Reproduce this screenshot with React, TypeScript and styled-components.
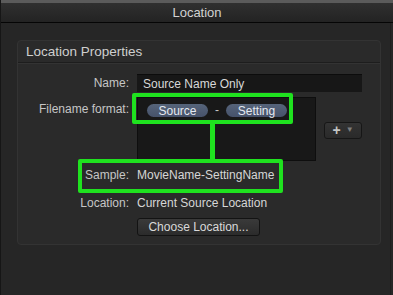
import styled, { createGlobalStyle } from "styled-components";

const GlobalStyle = createGlobalStyle`
  html, body {
    margin: 0;
    padding: 0;
    background: #262626;
  }
  body {
    font-family: "Liberation Sans", Arial, sans-serif;
    -webkit-font-smoothing: antialiased;
  }
`;

const ANNOTATE = "#1fe21f";

const Window = styled.div`
  width: 393px;
  height: 295px;
  display: flex;
  flex-direction: column;
  background: #262626;
  border-left: 1px solid #161616;
  box-sizing: border-box;
  overflow: hidden;
`;

const TopStrip = styled.div`
  height: 3px;
  background: #5b5b5b;
`;

const TitleBar = styled.div`
  height: 19px;
  display: flex;
  align-items: center;
  justify-content: center;
  background: linear-gradient(#303030, #232323);
  border-bottom: 1px solid #050505;
  color: #d2d2d2;
  font-size: 13px;
`;

const Body = styled.div`
  flex: 1;
  padding: 17px 9px 0 16px;
  border-right: 1px solid #1e1e1e;
  margin-right: 2px;
`;

const Panel = styled.div`
  position: relative;
  background: #2a2a2a;
  border: 1px solid #333;
  border-radius: 4px;
  padding-bottom: 8px;
`;

const PanelHeader = styled.div`
  height: 21px;
  display: flex;
  align-items: center;
  padding-left: 8px;
  color: #cfcfcf;
  font-size: 13.5px;
  border-bottom: 1px solid #1d1d1d;
  box-shadow: 0 1px 0 #333;
`;

const Form = styled.div`
  display: grid;
  grid-template-columns: 111px 1fr;
  column-gap: 8px;
  padding: 11px 22px 0 0;
`;

const Label = styled.div<{ $top?: number }>`
  justify-self: end;
  align-self: ${({ $top }) => ($top !== undefined ? "start" : "center")};
  padding-top: ${({ $top }) => $top ?? 0}px;
  color: #c6c6c6;
  font-size: 12px;
  line-height: 14px;
  white-space: nowrap;
`;

const Value = styled.div<{ $mt?: number }>`
  color: #d6d6d6;
  font-size: 12px;
  line-height: 14px;
  white-space: nowrap;
`;

const Cell = styled.div<{ $mt?: number }>`
  margin-top: ${({ $mt }) => $mt ?? 0}px;
  display: flex;
  align-items: center;
`;

const TextField = styled.div`
  flex: 1;
  height: 18px;
  box-sizing: border-box;
  background: #171717;
  border-top: 1px solid #0c0c0c;
  padding: 0 6px;
  display: flex;
  align-items: center;
  color: #d8d8d8;
  font-size: 12px;
`;

const TokenField = styled.div`
  width: 179px;
  height: 64px;
  box-sizing: border-box;
  background: #181818;
  border: 1px solid #0e0e0e;
  padding: 5px 0 0 9px;
  display: flex;
  align-items: flex-start;
  gap: 7px;
  color: #bbb;
  font-size: 12px;
`;

const Token = styled.span`
  height: 13px;
  width: 61px;
  margin-top: 1px;
  display: inline-flex;
  align-items: center;
  justify-content: center;
  border-radius: 7px;
  background: linear-gradient(#56647a, #46526a);
  color: #e4e9f0;
  font-size: 12px;
`;

const Dash = styled.span`
  line-height: 15px;
  color: #c8c8c8;
`;

const AddButton = styled.div`
  margin-left: 8px;
  width: 38px;
  height: 17px;
  box-sizing: border-box;
  border: 1px solid #161616;
  border-radius: 3px;
  background: linear-gradient(#333, #2a2a2a);
  display: flex;
  align-items: center;
  justify-content: center;
  gap: 5px;
  margin-top: 2px;
`;

const Plus = styled.span`
  color: #c4c4c4;
  font-size: 14px;
  font-weight: bold;
  line-height: 14px;
`;

const Caret = styled.span`
  color: #7e7e7e;
  font-size: 8px;
  line-height: 8px;
`;

const PushButton = styled.div`
  width: 123px;
  height: 18px;
  box-sizing: border-box;
  border: 1px solid #131313;
  border-radius: 3px;
  background: linear-gradient(#3a3a3a, #2b2b2b);
  color: #dadada;
  font-size: 12px;
  display: flex;
  align-items: center;
  justify-content: center;
`;

const Highlight = styled.div<{ $left: number; $top: number; $w: number; $h: number }>`
  position: absolute;
  left: ${({ $left }) => $left}px;
  top: ${({ $top }) => $top}px;
  width: ${({ $w }) => $w}px;
  height: ${({ $h }) => $h}px;
  box-sizing: border-box;
  border: 4px solid ${ANNOTATE};
  border-radius: 2px;
  pointer-events: none;
`;

const Connector = styled.div`
  position: absolute;
  left: 192px;
  top: 82px;
  width: 5px;
  height: 37px;
  background: ${ANNOTATE};
`;

export default function App() {
  return (
    <>
      <GlobalStyle />
      <Window>
        <TopStrip />
        <TitleBar>Location</TitleBar>
        <Body>
          <Panel>
            <PanelHeader>Location Properties</PanelHeader>
            <Form>
              <Label>Name:</Label>
              <Cell>
                <TextField>Source Name Only</TextField>
              </Cell>

              <Label $top={10}>Filename format:</Label>
              <Cell $mt={5}>
                <TokenField>
                  <Token>Source</Token>
                  <Dash>-</Dash>
                  <Token>Setting</Token>
                </TokenField>
                <AddButton>
                  <Plus>+</Plus>
                  <Caret>▼</Caret>
                </AddButton>
              </Cell>

              <Label style={{ marginTop: 7 }}>Sample:</Label>
              <Cell $mt={7}>
                <Value>MovieName-SettingName</Value>
              </Cell>

              <Label style={{ marginTop: 14 }}>Location:</Label>
              <Cell $mt={14}>
                <Value>Current Source Location</Value>
              </Cell>

              <div />
              <Cell $mt={8}>
                <PushButton>Choose Location...</PushButton>
              </Cell>
            </Form>

            <Highlight $left={114} $top={52} $w={161} $h={31} />
            <Connector />
            <Highlight $left={60} $top={118} $w={205} $h={34} />
          </Panel>
        </Body>
      </Window>
    </>
  );
}
